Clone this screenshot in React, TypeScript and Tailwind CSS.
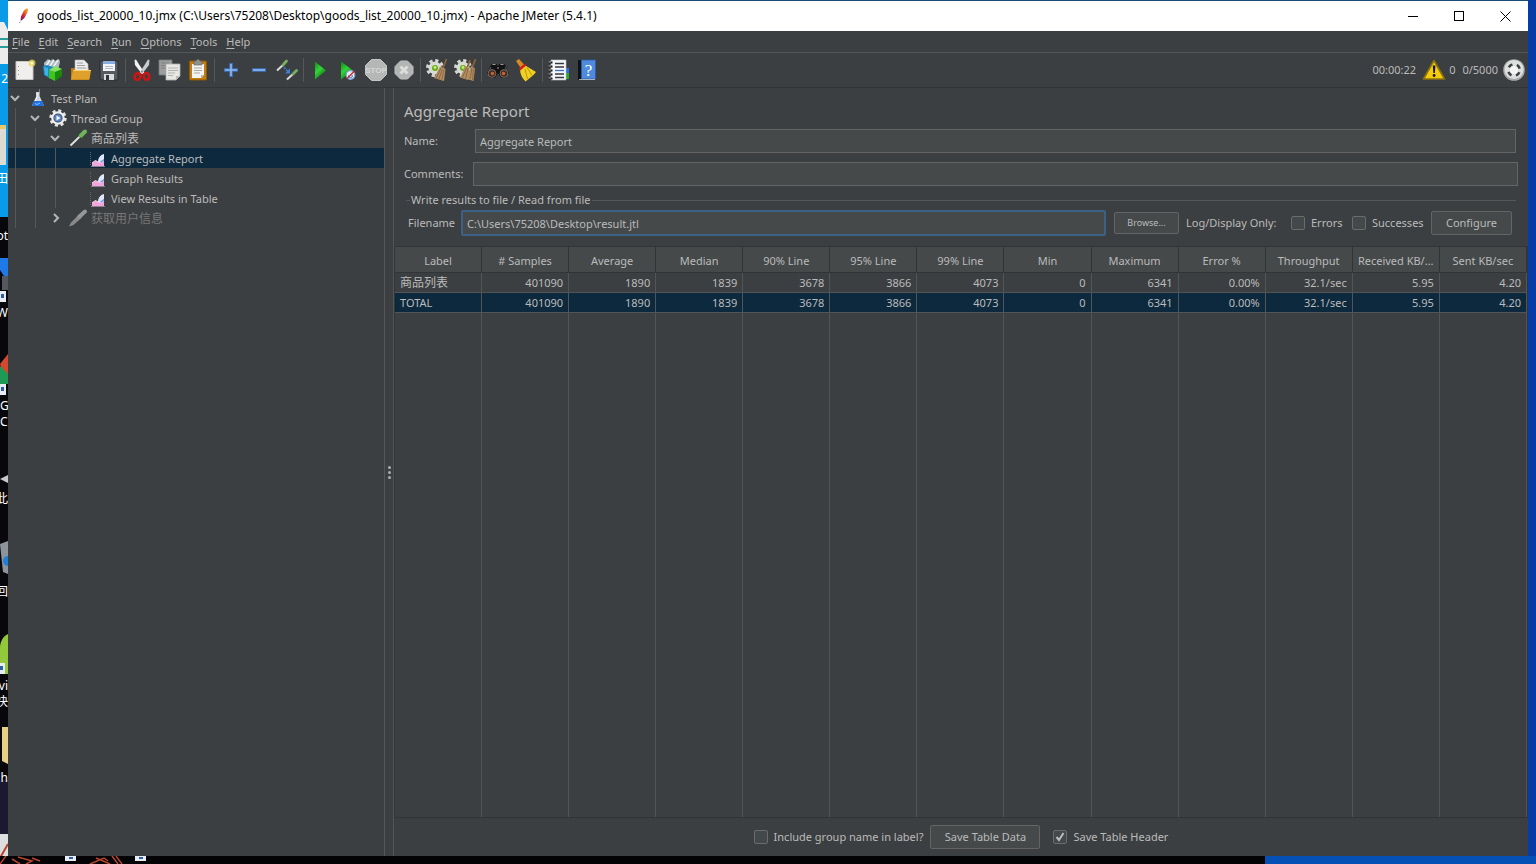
import React from 'react';
import clsx from 'clsx';

interface IconProps {
  className?: string;
}

interface TreeItem {
  label: string;
  depth: number;
  icon: React.FC<IconProps>;
  state: 'open' | 'closed' | 'leaf';
  selected?: boolean;
  disabled?: boolean;
  cjk?: boolean;
}

interface ToolItem {
  title: string;
  icon: React.FC<IconProps>;
}

const svgProps = { viewBox: '0 0 24 24', 'aria-hidden': true } as const;

const FeatherIcon: React.FC<IconProps> = ({ className }) => (
  <svg viewBox="0 0 16 16" className={className} aria-hidden="true">
    <defs>
      <linearGradient id="feather" x1="0" y1="1" x2="0.6" y2="0">
        <stop offset="0" stopColor="#6b1a6e" />
        <stop offset="0.45" stopColor="#cf2436" />
        <stop offset="1" stopColor="#f59a23" />
      </linearGradient>
    </defs>
    <path d="M11.300.6c1.200.4.9 2 0 3.800L8.400 10 5.800 12.300l-1.200-.6.400-3.200L7.400 3.600c1-1.800 2.600-3.300 3.900-3z" fill="url(#feather)" />
    <path d="M5.200 12.300 3.400 15" stroke="#5b2a5e" strokeWidth="0.8" strokeDasharray="1 1" />
  </svg>
);

const NewIcon: React.FC<IconProps> = ({ className }) => (
  <svg {...svgProps} className={className}>
    <path d="M3 3.500h17v18H3z" fill="#f0efee" stroke="#c9c7c4" />
    <path d="M5.500 8v1M5.500 12v1M5.500 16v1" stroke="#999" />
    <circle cx="19" cy="5" r="3.500" fill="#e9d74e" opacity="0.75" />
    <circle cx="19" cy="5" r="1.600" fill="#fffcc8" />
  </svg>
);

const TemplatesIcon: React.FC<IconProps> = ({ className }) => (
  <svg {...svgProps} className={className}>
    <path d="M3 5l4-4 2 2 3-2 2 2 4-2 1 3-2 8H4z" fill="#aebcc3" />
    <path d="M5 8l4-6M9 8l4-6M13 8l4-6" stroke="#eef3f5" strokeWidth="1.400" />
    <path d="M2 8l4-1 6 2v12l-4-1-5-3z" fill="#1d86c4" />
    <path d="M3 9l4 1v8l-3-1z" fill="#3fb3e6" />
    <path d="M8 12l6 2v9l-6-3z" fill="#3fc420" />
    <path d="M14 14l7-3v7l-7 5z" fill="#178a0a" />
    <path d="M8 12l6-4 7 3-7 3z" fill="#83e45e" />
  </svg>
);

const OpenIcon: React.FC<IconProps> = ({ className }) => (
  <svg {...svgProps} className={className}>
    <path d="M2 10h4V8h12v2h2v12H2z" fill="#b77a10" />
    <path d="M6 2h9l4 4v9H6z" fill="#ececec" stroke="#b5b5b5" strokeWidth="0.6" />
    <path d="M8 5h6M8 7.500h8M8 10h9" stroke="#8b8b8b" strokeWidth="0.8" />
    <path d="M2 21.500 4 12h18l-1.500 9.500z" fill="#dfa02b" />
    <path d="M4.500 12.500H22" stroke="#f7cf73" />
  </svg>
);

const SaveIcon: React.FC<IconProps> = ({ className }) => (
  <svg {...svgProps} className={className}>
    <path d="M3 3h18v19H5l-2-2z" fill="#555b61" stroke="#2b2e31" />
    <path d="M6 3h12v10H6z" fill="#f1f4f8" />
    <path d="M6 3h12v3H6z" fill="#87aede" />
    <path d="M8 8.500h8M8 10.500h8" stroke="#a9adb2" strokeWidth="0.8" />
    <path d="M7 16h10v6H7z" fill="#d8dadc" />
    <path d="M9 17h3v5H9z" fill="#33373b" />
  </svg>
);

const CutIcon: React.FC<IconProps> = ({ className }) => (
  <svg {...svgProps} className={className}>
    <path d="M4.500 2l1.500-.5 8.500 13.500-2.500 1L5 7z" fill="#f2f2f2" />
    <path d="M19.500 2 18 1.500 9.500 15l2.500 1 7-9z" fill="#c9cccd" />
    <ellipse cx="7.500" cy="18.500" rx="2.800" ry="3.500" fill="none" stroke="#d01414" strokeWidth="2.600" transform="rotate(25 7.500 18.500)" />
    <ellipse cx="16.500" cy="18.500" rx="2.800" ry="3.500" fill="none" stroke="#d01414" strokeWidth="2.600" transform="rotate(-25 16.500 18.500)" />
    <circle cx="12" cy="13.500" r="1" fill="#888" />
  </svg>
);

const CopyIcon: React.FC<IconProps> = ({ className }) => (
  <svg {...svgProps} className={className}>
    <path d="M1 2h13v15H1z" fill="#9c9e9d" stroke="#77797a" strokeWidth="0.8" />
    <path d="M3 5h8M3 7.500h8M3 10h8" stroke="#7f8181" />
    <path d="M8 6h14v12l-4 4H8z" fill="#e7e8e4" stroke="#b0b1ae" strokeWidth="0.8" />
    <path d="M10 10h10M10 12.500h10M10 15h7M10 17.500h5" stroke="#b1b2ae" />
    <path d="M22 18h-4v4z" fill="#bdbeba" />
  </svg>
);

const PasteIcon: React.FC<IconProps> = ({ className }) => (
  <svg {...svgProps} className={className}>
    <rect x="3.500" y="3" width="17" height="19" rx="1" fill="#c17d11" stroke="#8f5902" />
    <path d="M6 6h12v11l-3 3H6z" fill="#f3f3f1" />
    <path d="M8 10h8M8 12.500h8M8 15h6" stroke="#a9aaa7" />
    <path d="M18 17h-3v3z" fill="#b7b8b5" />
    <path d="M8 3h2l1-1.500h2L14 3h2v4H8z" fill="#8d908c" stroke="#5c5f5b" strokeWidth="0.6" />
  </svg>
);

const PlusIcon: React.FC<IconProps> = ({ className }) => (
  <svg {...svgProps} className={className}>
    <path d="M12 5v14M5 12h14" stroke="#3c72bd" strokeWidth="3.600" />
    <path d="M12 6v12M6 12h12" stroke="#8fb9ea" strokeWidth="1.600" />
  </svg>
);

const MinusIcon: React.FC<IconProps> = ({ className }) => (
  <svg {...svgProps} className={className}>
    <path d="M5 12h14" stroke="#3c72bd" strokeWidth="3.600" />
    <path d="M6 12h12" stroke="#8fb9ea" strokeWidth="1.600" />
  </svg>
);

const ToggleIcon: React.FC<IconProps> = ({ className }) => (
  <svg {...svgProps} className={className}>
    <path d="M2 12.500 8 7" stroke="#d9dcd8" strokeWidth="2" />
    <path d="M8 7 11.500 3" stroke="#79ad62" strokeWidth="2.800" strokeLinecap="round" />
    <path d="M12 21.500 18 16" stroke="#d9dcd8" strokeWidth="2" />
    <path d="M18 16 21.500 12.500" stroke="#79ad62" strokeWidth="2.800" strokeLinecap="round" />
    <path d="M9 9.500l4 4" stroke="#3f7fdb" strokeWidth="1.500" strokeDasharray="2 1" />
    <path d="M15 10.500v5h-5z" fill="#3f7fdb" />
  </svg>
);

const StartIcon: React.FC<IconProps> = ({ className }) => (
  <svg {...svgProps} className={className}>
    <defs>
      <linearGradient id="start" x1="0" y1="0" x2="0.6" y2="1">
        <stop offset="0" stopColor="#0c8a12" />
        <stop offset="0.5" stopColor="#35d23a" />
        <stop offset="1" stopColor="#067209" />
      </linearGradient>
    </defs>
    <path d="M7 3.500 18 12.500 7 21.500z" fill="url(#start)" />
  </svg>
);

const StartNoPauseIcon: React.FC<IconProps> = ({ className }) => (
  <svg {...svgProps} className={className}>
    <path d="M5 3.500 17 12.500 5 21.500z" fill="url(#start)" />
    <circle cx="14.500" cy="17" r="4.300" fill="#e8eef6" stroke="#7fa5d6" strokeWidth="1.200" />
    <path d="M13 17a1.800 1.800 0 1 0 3 0" fill="none" stroke="#4f8bd8" strokeWidth="1.200" />
    <path d="M11 20.500 18.500 13" stroke="#d5262b" strokeWidth="1.500" />
  </svg>
);

const StopIcon: React.FC<IconProps> = ({ className }) => (
  <svg {...svgProps} className={className}>
    <path d="M7.500 1.500h9l6 6v9l-6 6h-9l-6-6v-9z" fill="#b5b6b6" stroke="#c4c5c5" />
    <text x="12" y="15" textAnchor="middle" fontSize="8" fontWeight="700" fontFamily="Liberation Sans, sans-serif" fill="#d6d7d7">
      STOP
    </text>
  </svg>
);

const ShutdownIcon: React.FC<IconProps> = ({ className }) => (
  <svg {...svgProps} className={className}>
    <path d="M8.500 3h7L21 8.500v7L15.500 21h-7L3 15.500v-7z" fill="#b3b4b4" stroke="#bfc0c0" />
    <path d="M8.500 8.500l7 7M15.500 8.500l-7 7" stroke="#dcdddd" strokeWidth="3" />
  </svg>
);

const Gear: React.FC = () => (
  <>
    <circle cx="10" cy="10" r="7.500" fill="none" stroke="#d5d6d3" strokeWidth="3" strokeDasharray="3.200 2.690" />
    <circle cx="10" cy="10" r="6.500" fill="#d9dbd7" />
    <circle cx="10" cy="10" r="3" fill="#68ad13" />
    <circle cx="10" cy="9.500" r="1.400" fill="#c6ec7c" />
  </>
);

const ClearIcon: React.FC<IconProps> = ({ className }) => (
  <svg {...svgProps} className={className}>
    <Gear />
    <path d="M21.500 1l-3.500 9" stroke="#8a6339" strokeWidth="1.800" />
    <path d="M15 8.500l5.500 2.500-1.500 12-10-3z" fill="#b28e62" />
    <path d="M16 10l-5 11M17.500 11l-4 11M19 11.500l-2.500 11" stroke="#80603a" strokeWidth="0.8" />
  </svg>
);

const ClearAllIcon: React.FC<IconProps> = ({ className }) => (
  <svg {...svgProps} className={className}>
    <Gear />
    <path d="M17 2l-2.500 7M22.500 1l-3 8" stroke="#8a6339" strokeWidth="1.800" />
    <path d="M12.500 8l4 2-1.500 12-8-2.500zM18 8l4 2.500-1.500 12.500-7-2z" fill="#b28e62" />
    <path d="M13.500 9.500l-4 10M15 10l-2.500 11M19 10l-2 11M20.500 11l-1 11" stroke="#80603a" strokeWidth="0.8" />
  </svg>
);

const SearchIcon: React.FC<IconProps> = ({ className }) => (
  <svg {...svgProps} className={className}>
    <path d="M5.500 6h5l1.500 2 1.500-2h5L23 15l-3 5h-5l-3-5-3 5H4l-3-5z" fill="#121212" />
    <path d="M6.500 6.500h3M14.500 6.500h3M11 10h2" stroke="#9d9d9d" strokeWidth="1.200" />
    <path d="M5 9l-2 4M19 9l2 4" stroke="#5b5b5b" />
    <circle cx="6" cy="15.500" r="3.900" fill="#4a2a1b" stroke="#777" strokeWidth="0.900" />
    <circle cx="18" cy="15.500" r="3.900" fill="#4a2a1b" stroke="#777" strokeWidth="0.900" />
    <circle cx="6.500" cy="15.500" r="1.800" fill="#bb6438" />
    <circle cx="17.500" cy="15.500" r="1.800" fill="#bb6438" />
  </svg>
);

const BroomIcon: React.FC<IconProps> = ({ className }) => (
  <svg {...svgProps} className={className}>
    <path d="M2 3 5 1l5.500 6L7 10.500z" fill="#d98a20" />
    <path d="M10.500 7 22 14l-2.500 3-8 6.500C8 20 6 16 6 11z" fill="#f0d020" />
    <path d="M11 11l2.500 10M13 9.500l5 8" stroke="#b78f0a" strokeWidth="0.9" />
    <path d="M5.500 11.500 11.500 6.500" stroke="#cf1f1f" strokeWidth="2.400" />
  </svg>
);

const FunctionIcon: React.FC<IconProps> = ({ className }) => (
  <svg {...svgProps} className={className}>
    <path d="M16 10h6v5h-6z" fill="#2b6fd8" />
    <path d="M16 15h6v6h-6z" fill="#2fa52e" />
    <path d="M4 2h15v20H4z" fill="#f6f7f9" stroke="#c2c4c8" strokeWidth="0.6" />
    <path d="M8 5.500h9M8 9h9M8 16h9M8 19.500h9" stroke="#37393d" strokeWidth="1.300" />
    <path d="M8 12.500h9" stroke="#3b70c8" strokeWidth="1.300" />
    <path d="M1.500 4.500h4M1.500 8.500h4M1.500 12.500h4M1.500 16.500h4M1.500 20.500h4" stroke="#151515" strokeWidth="1.800" />
    <path d="M1.500 4h2.500M1.500 8h2.500M1.500 12h2.500M1.500 16h2.500M1.500 20h2.500" stroke="#ddd" strokeWidth="0.8" />
  </svg>
);

const HelpIcon: React.FC<IconProps> = ({ className }) => (
  <svg {...svgProps} className={className}>
    <path d="M3 2h5v20H3z" fill="#0f1216" />
    <path d="M6.500 2h14v19h-14z" fill="#4f8add" stroke="#2b5cab" strokeWidth="0.8" />
    <path d="M4 21.500h16" stroke="#c8ced8" strokeWidth="0.8" />
    <text x="13.500" y="17.500" textAnchor="middle" fontSize="17" fontFamily="Liberation Serif, serif" fill="#fff">
      ?
    </text>
  </svg>
);

const WarningIcon: React.FC<IconProps> = ({ className }) => (
  <svg {...svgProps} className={className}>
    <path d="M12 2.500 22.500 21h-21z" fill="#f5cb0c" stroke="#8a7210" strokeWidth="1.600" strokeLinejoin="round" />
    <path d="M10.800 7.500h2.600l-.6 7.500h-1.400z" fill="#111" />
    <circle cx="12.100" cy="17.500" r="1.400" fill="#111" />
  </svg>
);

const RemoteIcon: React.FC<IconProps> = ({ className }) => (
  <svg {...svgProps} className={className}>
    <circle cx="12" cy="12" r="10.800" fill="#a9aaaa" />
    <circle cx="12" cy="11.500" r="9.500" fill="#dedfdf" />
    <circle cx="12" cy="12" r="5.800" fill="none" stroke="#3d4042" strokeWidth="2.600" strokeDasharray="4.400 4.710" strokeDashoffset="-2.350" />
    <circle cx="12" cy="12" r="4" fill="#f4f4f4" />
  </svg>
);

const FlaskIcon: React.FC<IconProps> = ({ className }) => (
  <svg viewBox="0 0 18 18" className={className} aria-hidden="true">
    <path d="M7 3h4l-.5 4 4 8.500c.3 1-.2 1.500-1 1.500h-9c-.8 0-1.300-.5-1-1.500l4-8.500z" fill="#cfd6dd" />
    <path d="M5 12h8l1.500 3.500c.3 1-.2 1.500-1 1.500h-9c-.8 0-1.300-.5-1-1.500z" fill="#1f6fe0" />
    <path d="M8 4v4l-2 4" stroke="#fff" fill="none" />
    <path d="M10.500 0v6" stroke="#8a9096" strokeWidth="0.8" />
    <path d="M6 14.500l2 1 3-1.500" stroke="#8cc1ff" fill="none" />
  </svg>
);

const ThreadGroupIcon: React.FC<IconProps> = ({ className }) => (
  <svg viewBox="0 0 18 18" className={className} aria-hidden="true">
    <circle cx="9" cy="9" r="7.200" fill="none" stroke="#e2e4e6" strokeWidth="3" strokeDasharray="3 2.650" />
    <circle cx="9" cy="9" r="5.700" fill="#3c4f73" stroke="#eceeef" strokeWidth="2.200" />
    <circle cx="9" cy="9" r="3.600" fill="#5f86c4" />
    <path d="M7.500 6.500 11.500 9l-4 2.500z" fill="#f4f8ff" />
  </svg>
);

const DropperIcon: React.FC<IconProps> = ({ className }) => (
  <svg viewBox="0 0 18 18" className={className} aria-hidden="true">
    <path d="M0 17.500 2 14 10 6l2.500 2.500-8.500 7.500z" fill="#2f3231" />
    <path d="M1.500 16.500 10.500 7.700" stroke="#dfe2df" strokeWidth="2" />
    <path d="M9 5l4.500 4.500" stroke="#2f5a24" strokeWidth="2" />
    <path d="M12 6.500 16 2.500" stroke="#72b45e" strokeWidth="4" strokeLinecap="round" />
  </svg>
);

const DropperOffIcon: React.FC<IconProps> = ({ className }) => (
  <svg viewBox="0 0 18 18" className={className} aria-hidden="true">
    <path d="M0 17.500 2 13.500 10 5.500l3 3-8.500 7.500z" fill="#8a8a8a" />
    <path d="M10.500 7.500 16 2.500" stroke="#969696" strokeWidth="4" strokeLinecap="round" />
  </svg>
);

const ReportIcon: React.FC<IconProps> = ({ className }) => (
  <svg viewBox="0 0 18 18" className={className} aria-hidden="true">
    <path d="M1.500 3v14" stroke="#64676a" strokeDasharray="1 1" />
    <path d="M3 17v-3l3.500-2.500L9 13l6-2v6z" fill="#f3a6dd" />
    <path d="M3 14l3.500-2.500L9 13" stroke="#fcd9f3" fill="none" />
    <path d="M9 13c0-4 2-7 6-8v7c-2 1.500-4 2.500-6 1z" fill="#dfe9fb" />
    <path d="M11 12c1.500 0 3-1 4-2.500V12l-3 1.500z" fill="#7a9ce0" />
    <path d="M2 17.500h14" stroke="#8b7f8b" />
  </svg>
);

const TOOL_GROUPS: ToolItem[][] = [
  [
    { title: 'New', icon: NewIcon },
    { title: 'Templates...', icon: TemplatesIcon },
    { title: 'Open', icon: OpenIcon },
    { title: 'Save', icon: SaveIcon },
  ],
  [
    { title: 'Cut', icon: CutIcon },
    { title: 'Copy', icon: CopyIcon },
    { title: 'Paste', icon: PasteIcon },
  ],
  [
    { title: 'Expand All', icon: PlusIcon },
    { title: 'Collapse All', icon: MinusIcon },
    { title: 'Toggle', icon: ToggleIcon },
  ],
  [
    { title: 'Start', icon: StartIcon },
    { title: 'Start no pauses', icon: StartNoPauseIcon },
    { title: 'Stop', icon: StopIcon },
    { title: 'Shutdown', icon: ShutdownIcon },
  ],
  [
    { title: 'Clear', icon: ClearIcon },
    { title: 'Clear All', icon: ClearAllIcon },
  ],
  [
    { title: 'Search', icon: SearchIcon },
    { title: 'Reset Search', icon: BroomIcon },
  ],
  [
    { title: 'Function Helper Dialog', icon: FunctionIcon },
    { title: 'Help', icon: HelpIcon },
  ],
];

const MENUS = ['File', 'Edit', 'Search', 'Run', 'Options', 'Tools', 'Help'];

const TREE: TreeItem[] = [
  { label: 'Test Plan', depth: 0, icon: FlaskIcon, state: 'open' },
  { label: 'Thread Group', depth: 1, icon: ThreadGroupIcon, state: 'open' },
  { label: '商品列表', depth: 2, icon: DropperIcon, state: 'open', cjk: true },
  { label: 'Aggregate Report', depth: 3, icon: ReportIcon, state: 'leaf', selected: true },
  { label: 'Graph Results', depth: 3, icon: ReportIcon, state: 'leaf' },
  { label: 'View Results in Table', depth: 3, icon: ReportIcon, state: 'leaf' },
  { label: '获取用户信息', depth: 2, icon: DropperOffIcon, state: 'closed', disabled: true, cjk: true },
];

const COLUMNS = [
  'Label',
  '# Samples',
  'Average',
  'Median',
  '90% Line',
  '95% Line',
  '99% Line',
  'Min',
  'Maximum',
  'Error %',
  'Throughput',
  'Received KB/...',
  'Sent KB/sec',
];

const ROWS = [
  ['商品列表', '401090', '1890', '1839', '3678', '3866', '4073', '0', '6341', '0.00%', '32.1/sec', '5.95', '4.20'],
  ['TOTAL', '401090', '1890', '1839', '3678', '3866', '4073', '0', '6341', '0.00%', '32.1/sec', '5.95', '4.20'],
];

const TitleBar: React.FC = () => (
  <header className="flex h-[30px] shrink-0 items-center bg-white text-black">
    <FeatherIcon className="ml-2 h-4 w-4" />
    <h1 className="ml-[5px] flex-1 truncate text-xs">
      goods_list_20000_10.jmx (C:\Users\75208\Desktop\goods_list_20000_10.jmx) - Apache JMeter (5.4.1)
    </h1>
    <button type="button" aria-label="Minimize" className="flex h-full w-[46px] items-center justify-center">
      <svg viewBox="0 0 11 11" className="h-[11px] w-[11px]" shapeRendering="crispEdges">
        <path d="M0 5.500h10" stroke="#000" />
      </svg>
    </button>
    <button type="button" aria-label="Maximize" className="flex h-full w-[46px] items-center justify-center">
      <svg viewBox="0 0 11 11" className="h-[11px] w-[11px]" shapeRendering="crispEdges">
        <path d="M.5.5h9v9h-9z" fill="none" stroke="#000" />
      </svg>
    </button>
    <button type="button" aria-label="Close" className="flex h-full w-[46px] items-center justify-center">
      <svg viewBox="0 0 11 11" className="h-[11px] w-[11px]">
        <path d="M.5.5l10 10M10.500.5l-10 10" stroke="#000" />
      </svg>
    </button>
  </header>
);

const MenuBar: React.FC = () => (
  <nav className="flex h-[22px] shrink-0 items-center gap-[9px] border-b border-[#555555] pl-1">
    {MENUS.map((menu) => (
      <button key={menu} type="button">
        <span className="underline underline-offset-2">{menu[0]}</span>
        {menu.slice(1)}
      </button>
    ))}
  </nav>
);

const ToolBar: React.FC = () => (
  <div role="toolbar" className="flex h-[35px] shrink-0 items-center border-b border-[#323537] pr-0.5 pl-[3px]">
    {TOOL_GROUPS.map((group, index) => (
      <div key={group[0].title} className="flex items-center">
        {index > 0 && <span className="mx-0.5 h-6 w-px bg-[#55585a]" />}
        {group.map(({ title, icon: Icon }) => (
          <button key={title} type="button" title={title} className="flex w-7 justify-center">
            <Icon className="h-6 w-6" />
          </button>
        ))}
      </div>
    ))}
    <div className="ml-auto flex items-center">
      <span>00:00:22</span>
      <button type="button" title="Log errors" className="ml-1.5 flex items-center gap-[3px]">
        <WarningIcon className="h-6 w-6" />0
      </button>
      <span className="ml-[7px]">0/5000</span>
      <RemoteIcon className="ml-1 h-6 w-6" />
    </div>
  </div>
);

const TreeRow: React.FC<{ item: TreeItem }> = ({ item }) => {
  const Icon = item.icon;

  return (
    <li
      className={clsx(
        'flex h-5 items-center pl-0.5',
        item.selected && 'bg-[#0d293e]',
        item.disabled && 'text-[#777777]'
      )}
    >
      {Array.from({ length: item.depth }, (_, i) => (
        <span key={i} className="flex h-full w-5 shrink-0 pl-[5px]">
          <span className="h-full w-px bg-[#55585a]" />
        </span>
      ))}
      <span className="flex w-[19px] shrink-0">
        {item.state !== 'leaf' && (
          <svg viewBox="0 0 10 10" className="h-2.5 w-2.5" fill="none" stroke="#b4b6b7" strokeWidth="2">
            <path d={item.state === 'open' ? 'M1 3l4 4 4-4' : 'M4 1l4 4-4 4'} />
          </svg>
        )}
      </span>
      <Icon className="mr-1 h-[18px] w-[18px] shrink-0" />
      <span className={clsx('truncate pt-0.5', item.cjk && 'text-xs')}>{item.label}</span>
    </li>
  );
};

interface CheckProps {
  id: string;
  label: string;
  checked?: boolean;
  className?: string;
}

const Check: React.FC<CheckProps> = ({ id, label, checked, className }) => (
  <div className={clsx('flex shrink-0 items-center gap-1.5', className)}>
    <span className="relative flex h-3.5 w-3.5">
      <input
        id={id}
        type="checkbox"
        defaultChecked={checked}
        className="peer h-3.5 w-3.5 appearance-none rounded-xs border border-[#6b6b6b] bg-[#43494a]"
      />
      <svg
        viewBox="0 0 14 14"
        className="pointer-events-none absolute inset-0 hidden peer-checked:block"
        fill="none"
        stroke="#bbbbbb"
        strokeWidth="2"
      >
        <path d="M3.500 7l2.500 3 4.500-7" />
      </svg>
    </span>
    <label htmlFor={id}>{label}</label>
  </div>
);

const buttonClass = 'shrink-0 rounded-xs border border-[#646464] bg-[#45494a] text-center';
const inputClass = 'h-6 min-w-0 flex-1 border border-[#646464] bg-[#45494a] px-1 outline-none';

const ResultsTable: React.FC = () => (
  <table className="h-full w-full table-fixed border-separate border-spacing-0">
    <thead>
      <tr className="h-[26px] bg-[#45494a]">
        {COLUMNS.map((column) => (
          <th key={column} className="border-r border-b border-[#323537] px-px pt-0.5 text-center font-normal whitespace-nowrap">
            {column}
          </th>
        ))}
      </tr>
    </thead>
    <tbody>
      {ROWS.map((row, rowIndex) => (
        <tr key={row[0]} className={clsx('h-5', rowIndex === 1 && 'bg-[#0d293e]')}>
          {row.map((value, i) => (
            <td
              key={COLUMNS[i]}
              className={clsx(
                'truncate border-r border-b border-[#525557] px-[5px]',
                i > 0 && 'text-right',
                i === 0 && rowIndex === 0 && 'text-xs'
              )}
            >
              {value}
            </td>
          ))}
        </tr>
      ))}
      <tr>
        {COLUMNS.map((column) => (
          <td key={column} className="border-r border-[#525557]" />
        ))}
      </tr>
    </tbody>
  </table>
);

const ReportPanel: React.FC = () => (
  <section className="flex min-w-0 flex-1 flex-col border-l border-[#555555]">
    <div className="flex flex-col px-2.5 pt-3">
      <h2 className="mb-[7px] text-[15px] leading-[22px]">Aggregate Report</h2>
      <div className="mb-[9px] flex items-center pr-0.5">
        <label htmlFor="name" className="w-[71px]">Name:</label>
        <input id="name" type="text" defaultValue="Aggregate Report" className={inputClass} />
      </div>
      <div className="mb-1.5 flex items-center">
        <label htmlFor="comments" className="w-[69px]">Comments:</label>
        <input id="comments" type="text" className={inputClass} />
      </div>
    </div>
    <fieldset className="min-w-0 pr-3 pb-2.5 pl-3.5">
      <div className="mb-0.5 -ml-0.5 flex h-4 items-center">
        <span className="mr-px h-px w-1 bg-[#55585a]" />
        <span>Write results to file / Read from file</span>
        <span className="ml-0.5 h-px flex-1 bg-[#55585a]" />
      </div>
      <div className="flex h-[26px] items-center pr-1">
        <label htmlFor="filename" className="w-[53px]">Filename</label>
        <input
          id="filename"
          type="text"
          defaultValue="C:\Users\75208\Desktop\result.jtl"
          className="h-[26px] min-w-0 flex-1 rounded-xs border-2 border-[#3d6185] bg-[#45494a] px-1 outline-none"
        />
        <button type="button" className={clsx(buttonClass, 'mr-[7px] ml-2 h-[22px] w-[65px] text-[9px]')}>Browse...</button>
        <span className="w-[105px] shrink-0">Log/Display Only:</span>
        <Check id="errors" label="Errors" className="w-[61px]" />
        <Check id="successes" label="Successes" className="w-[79px]" />
        <button type="button" className={clsx(buttonClass, 'h-6 w-[81px]')}>Configure</button>
      </div>
    </fieldset>
    <div className="min-h-0 flex-1 border border-[#323537]">
      <ResultsTable />
    </div>
    <footer className="flex h-[38px] shrink-0 items-center justify-center">
      <Check id="group-name" label="Include group name in label?" />
      <button type="button" className={clsx(buttonClass, 'mr-[13px] ml-[7px] h-6 w-[110px]')}>Save Table Data</button>
      <Check id="save-header" label="Save Table Header" checked />
    </footer>
  </section>
);

// Sliver of the desktop that stays visible left of the window
const DesktopLeft: React.FC = () => (
  <div className="relative w-2 shrink-0 overflow-hidden bg-[#08080c] text-xs text-white">
    <svg viewBox="0 0 8 864" className="absolute top-0 left-0 h-[864px] w-2">
      <path d="M0 0h8v217H0z" fill="#0a9be8" />
      <path d="M0 22h4l4 8v34H0z" fill="#ececec" />
      <path d="M0 39h8M0 47h8" stroke="#2a9d9a" strokeWidth="2" />
      <path d="M0 125h6v40H0z" fill="#dedbd2" />
      <path d="M0 125h6v4H0z" fill="#e9c766" />
      <path d="M0 258h8v18H4l-4-6z" fill="#1f7ae8" />
      <path d="M2 276h6v14H2z" fill="#55575e" />
      <path d="M0 364l8-10v20H3z" fill="#d3492f" />
      <path d="M0 366l8 8v10H0z" fill="#1f9a55" />
      <path d="M0 479l8-4v8z" fill="#c6c8ca" />
      <path d="M0 544l8-3v33l-5-2z" fill="#8d949b" />
      <circle cx="8" cy="561" r="5" fill="#1d7fd6" />
      <path d="M0 648c0-6 3-12 8-14v40H5v-11H0z" fill="#93c83d" />
      <path d="M0 291h6v11H0zM0 384h6v11H0zM0 663h5v11H0z" fill="#e8edf5" />
      <path d="M1 294h3v4H1zM1 387h3v4H1zM0 666h3v4H0z" fill="#2c5fa8" />
      <path d="M2 727h6v37l-6-3z" fill="#e8cf86" />
      <path d="M0 780h8v54H0z" fill="#1b1830" />
      <path d="M0 834h8v22H0z" fill="#dddee0" />
      <path d="M0 858l8-14" stroke="#b8432f" strokeWidth="2" />
    </svg>
    <span className="absolute top-[71px] right-0">2</span>
    <span className="absolute top-[171px] right-0">田</span>
    <span className="absolute top-[228px] right-0">ot</span>
    <span className="absolute top-[305px] right-0">W</span>
    <span className="absolute top-[398px] left-0">Go</span>
    <span className="absolute top-[414px] left-0">Ch</span>
    <span className="absolute top-[491px] right-0">此</span>
    <span className="absolute top-[584px] right-0">回</span>
    <span className="absolute top-[678px] right-0">vi</span>
    <span className="absolute top-[694px] right-0">快</span>
    <span className="absolute top-[770px] right-0">h</span>
  </div>
);

const DesktopBottom: React.FC = () => (
  <div className="flex h-2 shrink-0 bg-[#030305]">
    <svg viewBox="0 0 160 8" className="h-2 w-40">
      <path d="M0 8l6-8M12 3l8 5M18 1l14 4-6 3M32 2l8 3M90 8l14-6 4 3M96 2l14 6M112 0l6 8M116 0l6 8" stroke="#b8432f" strokeWidth="1.500" fill="none" />
      <path d="M65 0h11v5H65zM135 0h11v5h-11z" fill="#e8edf5" />
      <path d="M69 1h4v2h-4zM139 1h4v2h-4z" fill="#2c5fa8" />
    </svg>
    <span className="ml-auto h-full w-[271px] bg-[#0550b4]" />
  </div>
);

const App: React.FC = () => {
  return (
    <div className="flex h-screen flex-col overflow-hidden bg-[#1b4a72] font-['Noto_Sans','Noto_Sans_CJK_SC',sans-serif] text-[11px] leading-4 text-[#bbbbbb]">
      <div className="flex min-h-0 flex-1">
        <DesktopLeft />
        <main className="mt-px flex min-w-0 flex-1 flex-col bg-[#3c3f41]">
          <TitleBar />
          <MenuBar />
          <ToolBar />
          <div className="flex min-h-0 flex-1">
            <ul className="w-[377px] shrink-0 border-r border-[#555555]">
              {TREE.map((item) => (
                <TreeRow key={item.label} item={item} />
              ))}
            </ul>
            <div className="flex w-2 shrink-0 flex-col items-center justify-center gap-0.5">
              <span className="h-[3px] w-[3px] rounded-full bg-[#adadad]" />
              <span className="h-[3px] w-[3px] rounded-full bg-[#adadad]" />
              <span className="h-[3px] w-[3px] rounded-full bg-[#adadad]" />
            </div>
            <ReportPanel />
          </div>
        </main>
        <div className="w-2 shrink-0 bg-[#053ca6]" />
      </div>
      <DesktopBottom />
    </div>
  );
};

export default App;
